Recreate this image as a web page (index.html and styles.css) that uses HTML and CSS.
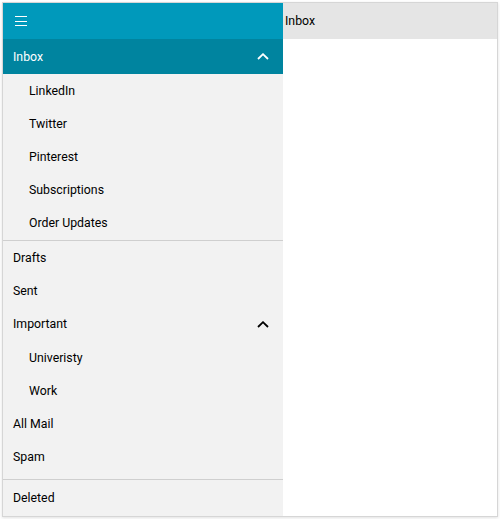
FILE: index.html
```html
<!DOCTYPE html>
<html>
<head>
<meta charset="utf-8">
<link rel="stylesheet" href="styles.css">
</head>
<body>
<div class="frame">
  <aside class="sidebar">
    <div class="topbar">
      <svg class="hamburger" width="12" height="11" viewBox="0 0 12 11">
        <path d="M0 0.5H12M0 5.5H12M0 9.5H12" stroke="#fff" stroke-width="1"/>
      </svg>
    </div>
    <div class="group-head active">
      <span>Inbox</span>
      <svg class="chev" width="12" height="7" viewBox="0 0 12 7"><polyline points="1,6 6,1.2 11,6" fill="none" stroke="#fff" stroke-width="1.8"/></svg>
    </div>
    <div class="sub">LinkedIn</div>
    <div class="sub">Twitter</div>
    <div class="sub">Pinterest</div>
    <div class="sub">Subscriptions</div>
    <div class="sub">Order Updates</div>
    <div class="sep first"></div>
    <div class="item">Drafts</div>
    <div class="item">Sent</div>
    <div class="group-head">
      <span>Important</span>
      <svg class="chev" width="12" height="7" viewBox="0 0 12 7"><polyline points="1,6 6,1.2 11,6" fill="none" stroke="#000" stroke-width="1.8"/></svg>
    </div>
    <div class="sub">Univeristy</div>
    <div class="sub">Work</div>
    <div class="item">All Mail</div>
    <div class="item">Spam</div>
    <div class="bottom">
      <div class="sep"></div>
      <div class="item last">Deleted</div>
    </div>
  </aside>
  <main class="main">
    <div class="mainbar">Inbox</div>
  </main>
</div>
</body>
</html>
```

FILE: styles.css
```css
html, body {
  margin: 0;
  padding: 0;
  background: #fff;
}
body {
  font-family: Roboto, "Liberation Sans", sans-serif;
  font-size: 12.3px;
  color: #000;
}
.frame {
  margin: 2px;
  width: 494px;
  height: 513px;
  border: 1px solid #d6d6d6;
  box-shadow: 0 1px 3px rgba(0, 0, 0, 0.12);
  display: flex;
  overflow: hidden;
}
.sidebar {
  width: 280px;
  flex: none;
  background: #f2f2f2;
  display: flex;
  flex-direction: column;
}
.topbar {
  height: 36px;
  background: #0099bb;
  display: flex;
  align-items: center;
  padding-left: 12px;
  flex: none;
}
.hamburger {
  display: block;
  margin-top: 1px;
}
.group-head {
  height: 34px;
  display: flex;
  align-items: center;
  justify-content: space-between;
  padding: 0 14px 0 10px;
  flex: none;
}
.group-head.active {
  height: 35px;
  background: #00849f;
  color: #fff;
}
.chev {
  display: block;
}
.sub {
  height: 33px;
  display: flex;
  align-items: center;
  padding-left: 26px;
  flex: none;
}
.item {
  height: 33px;
  display: flex;
  align-items: center;
  padding-left: 10px;
  flex: none;
}
.sep {
  border-top: 1px solid #cfcfcf;
  flex: none;
}
.sep.first {
  margin-top: 1px;
}
.bottom {
  margin-top: auto;
}
.item.last {
  height: 36px;
}
.main {
  flex: 1;
  background: #fff;
}
.mainbar {
  height: 36px;
  background: #e5e5e5;
  display: flex;
  align-items: center;
  padding-left: 2px;
}
```
